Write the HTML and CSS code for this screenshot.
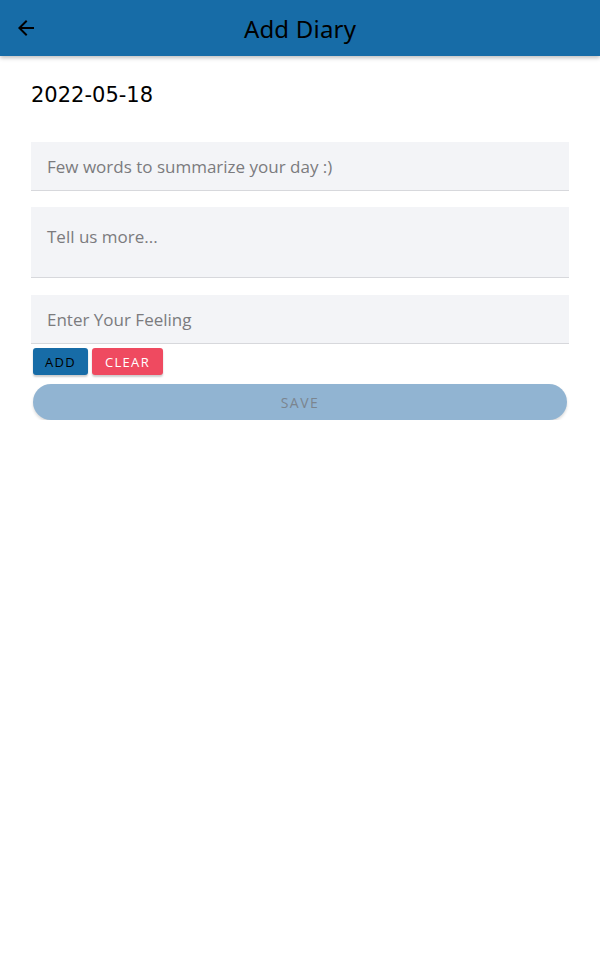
FILE: index.html
```html
<!DOCTYPE html>
<html>
<head>
<meta charset="utf-8">
<link rel="stylesheet" href="styles.css">
</head>
<body>
<header class="appbar">
  <button class="back" aria-label="Back">
    <svg width="24" height="24" viewBox="0 0 24 24"><path d="M20 11H7.83l5.59-5.59L12 4l-8 8 8 8 1.41-1.41L7.83 13H20v-2z" fill="#000"/></svg>
  </button>
  <h1 class="title">Add Diary</h1>
</header>
<main class="content">
  <div class="date">2022-05-18</div>
  <div class="field f1"><span class="ph">Few words to summarize your day :)</span></div>
  <div class="field tall"><span class="ph">Tell us more...</span></div>
  <div class="field f3"><span class="ph">Enter Your Feeling</span></div>
  <div class="actions">
    <button class="btn add">ADD</button>
    <button class="btn clear">CLEAR</button>
  </div>
  <button class="save">SAVE</button>
</main>
</body>
</html>
```
FILE: styles.css
```css
* { box-sizing: border-box; }
html, body { margin: 0; padding: 0; background: #fff; }
body { font-family: "Open Sans", "Noto Sans", sans-serif; color: #000; }
.appbar {
  height: 56px;
  background: #176ca7;
  display: flex;
  align-items: center;
  justify-content: center;
  position: relative;
  box-shadow: 0 2px 4px rgba(0,0,0,0.25);
}
.back {
  position: absolute;
  left: 14px;
  top: 16px;
  background: none;
  border: 0;
  padding: 0;
  width: 24px;
  height: 24px;
  display: flex;
}
.title {
  margin: 0;
  font-family: "Noto Sans", sans-serif;
  font-weight: 400;
  font-size: 24px;
  letter-spacing: 0.2px;
  color: #000;
}
.content {
  padding: 24px 31px 0 31px;
  display: flex;
  flex-direction: column;
}
.date {
  font-family: "DejaVu Sans", sans-serif;
  font-size: 21px;
  line-height: 30px;
  margin-bottom: 32px;
}
.field {
  background: #f3f4f7;
  border-bottom: 1px solid #d7d8dc;
  height: 49px;
  padding: 0 16px;
  display: flex;
  align-items: center;
}
.field.f1 { margin-bottom: 16px; }
.field.tall {
  height: 71px;
  align-items: flex-start;
  padding-top: 18px;
  margin-bottom: 17px;
}
.field.f3 { margin-bottom: 4px; }
.ph {
  font-size: 17px;
  color: #7b7b7e;
}
.actions {
  display: flex;
  gap: 4px;
  padding-left: 2px;
  margin-bottom: 9px;
}
.btn {
  height: 27px;
  border: 0;
  border-radius: 3px;
  font-family: "Open Sans", sans-serif;
  font-size: 13px;
  letter-spacing: 1.3px;
  padding: 0;
  box-shadow: 0 2px 2px rgba(0,0,0,0.2);
}
.btn.add { background: #176ca7; color: #000; width: 55px; }
.btn.clear { background: #ef4a60; color: #fff; width: 71px; }
.save {
  margin: 0 2px;
  height: 36px;
  border: 0;
  border-radius: 18px;
  background: #91b4d2;
  color: #7b858f;
  font-family: "Open Sans", sans-serif;
  font-size: 14px;
  letter-spacing: 1.5px;
  box-shadow: 0 2px 3px rgba(0,0,0,0.15);
}
```
